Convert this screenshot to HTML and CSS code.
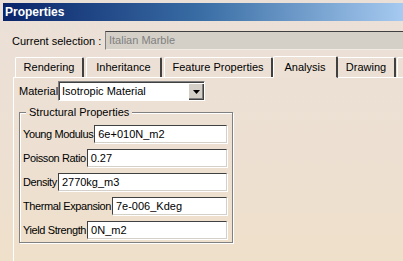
FILE: index.html
```html
<!DOCTYPE html>
<html>
<head>
<meta charset="utf-8">
<link rel="stylesheet" href="styles.css">
</head>
<body>
<div class="window">
  <div class="titlebar">Properties</div>
  <div class="selrow">
    <span class="sellabel">Current selection :</span>
    <div class="selfield">Italian Marble</div>
  </div>
  <div class="tabs">
    <div class="tab t1">Rendering</div>
    <div class="tab t2">Inheritance</div>
    <div class="tab t3">Feature Properties</div>
    <div class="tab active t4">Analysis</div>
    <div class="tab t5">Drawing</div>
    <div class="tab t6"></div>
  </div>
  <div class="panel">
    <div class="matrow">
      <span class="matlabel">Material</span>
      <div class="combo">
        <div class="combotext">Isotropic Material</div>
        <div class="combobtn"><svg width="7" height="4" viewBox="0 0 7 4"><path d="M0 0h7L3.5 4z" fill="#000"/></svg></div>
      </div>
    </div>
    <div class="group">
      <div class="legend">Structural Properties</div>
      <div class="row"><span class="lbl">Young Modulus</span><div class="inp">6e+010N_m2</div></div>
      <div class="row"><span class="lbl">Poisson Ratio</span><div class="inp">0.27</div></div>
      <div class="row"><span class="lbl">Density</span><div class="inp">2770kg_m3</div></div>
      <div class="row"><span class="lbl">Thermal Expansion</span><div class="inp">7e-006_Kdeg</div></div>
      <div class="row"><span class="lbl">Yield Strength</span><div class="inp">0N_m2</div></div>
    </div>
  </div>
</div>
</body>
</html>
```

FILE: styles.css
```css
html, body {
  margin: 0;
  padding: 0;
  width: 403px;
  height: 261px;
  overflow: hidden;
}
body {
  background: linear-gradient(#ebe0d8, #ede0d2 60%, #efe0ca);
  font-family: "Liberation Sans", Arial, sans-serif;
  font-size: 11px;
  color: #000;
}
.window {
  padding: 3px 0 0 3px;
  height: 258px;
  display: flex;
  flex-direction: column;
}
.titlebar {
  height: 18px;
  background: linear-gradient(to right, #0a246a, #3a6ea5 50%, #a6caf0);
  color: #fff;
  font-weight: bold;
  font-size: 12px;
  line-height: 18px;
  padding-left: 2px;
}
.selrow {
  display: flex;
  align-items: center;
  margin-top: 10px;
  height: 19px;
}
.sellabel {
  margin-left: 9px;
  width: 93px;
  white-space: nowrap;
}
.selfield {
  flex: 1;
  height: 17px;
  line-height: 17px;
  background: #d4d0c8;
  border-top: 1px solid #404040;
  border-left: 1px solid #808080;
  border-bottom: 1px solid #f0ece4;
  color: #808080;
  padding-left: 3px;
}
.tabs {
  display: flex;
  margin-top: 6px;
  margin-left: 12px;
  height: 21px;
  align-items: flex-end;
}
.tab {
  box-sizing: border-box;
  height: 20px;
  line-height: 19px;
  text-align: center;
  border-top: 1px solid #fff;
  border-left: 1px solid #fff;
  border-right: 2px solid #404040;
  border-radius: 2px 2px 0 0;
  white-space: nowrap;
  flex: 0 0 auto;
}
.t1 { width: 69px; margin-right: 2px; }
.t2 { width: 76px; margin-right: 2px; }
.t3 { width: 109px; margin-right: 1px; }
.t4 { width: 65px; margin-left: -1px; margin-right: -1px; }
.t5 { width: 59px; margin-right: 1px; }
.t6 { width: 20px; }
.tab.active {
  height: 22px;
  line-height: 21px;
  margin-bottom: -1px;
  background: #ede0d4;
  border-bottom: 1px solid #ede0d4;
  position: relative;
  z-index: 1;
}
.panel {
  flex: 1;
  margin-left: 10px;
  border-top: 1px solid #fff;
  border-left: 1px solid #fff;
  padding: 3px 0 0 5px;
}
.matrow {
  display: flex;
  align-items: center;
  height: 20px;
}
.matlabel {
  width: 39px;
  white-space: nowrap;
}
.combo {
  display: flex;
  box-sizing: border-box;
  width: 147px;
  height: 20px;
  border-top: 1px solid #808080;
  border-left: 1px solid #808080;
  border-right: 1px solid #fff;
  border-bottom: 1px solid #fff;
  background: #fff;
  box-shadow: inset 1px 1px 0 #404040;
}
.combotext {
  flex: 1;
  padding-left: 3px;
  line-height: 18px;
}
.combobtn {
  width: 15px;
  height: 16px;
  margin: 1px 1px 1px 0;
  background: #d4d0c8;
  border-top: 1px solid #fff;
  border-left: 1px solid #fff;
  box-sizing: border-box;
  box-shadow: inset -1px -1px 0 #808080, 1px 1px 0 #404040;
  display: flex;
  align-items: center;
  justify-content: center;
}
.group {
  position: relative;
  margin-top: 11px;
  width: 214px;
  height: 131px;
  border: 1px solid #808080;
  box-shadow: inset 1px 1px 0 #fff, 1px 1px 0 #fff;
  padding: 12px 0 0 3px;
  box-sizing: border-box;
  display: flex;
  flex-direction: column;
  gap: 6px;
}
.legend {
  position: absolute;
  top: -8px;
  left: 6px;
  padding: 0 3px 0 3px;
  background: #ece0d4;
  line-height: 15px;
}
.row {
  display: flex;
  align-items: center;
  height: 18px;
}
.lbl {
  white-space: nowrap;
  margin-right: 1px;
  letter-spacing: -0.4px;
}
.inp {
  width: 0;
  flex: 1 0 auto;
  box-sizing: border-box;
  height: 18px;
  line-height: 16px;
  background: #fff;
  border-top: 1px solid #404040;
  border-left: 1px solid #404040;
  border-right: 1px solid #d4d0c8;
  border-bottom: 1px solid #d4d0c8;
  box-shadow: 1px 1px 0 #fff;
  padding-left: 3px;
  margin-right: 5px;
}
```
